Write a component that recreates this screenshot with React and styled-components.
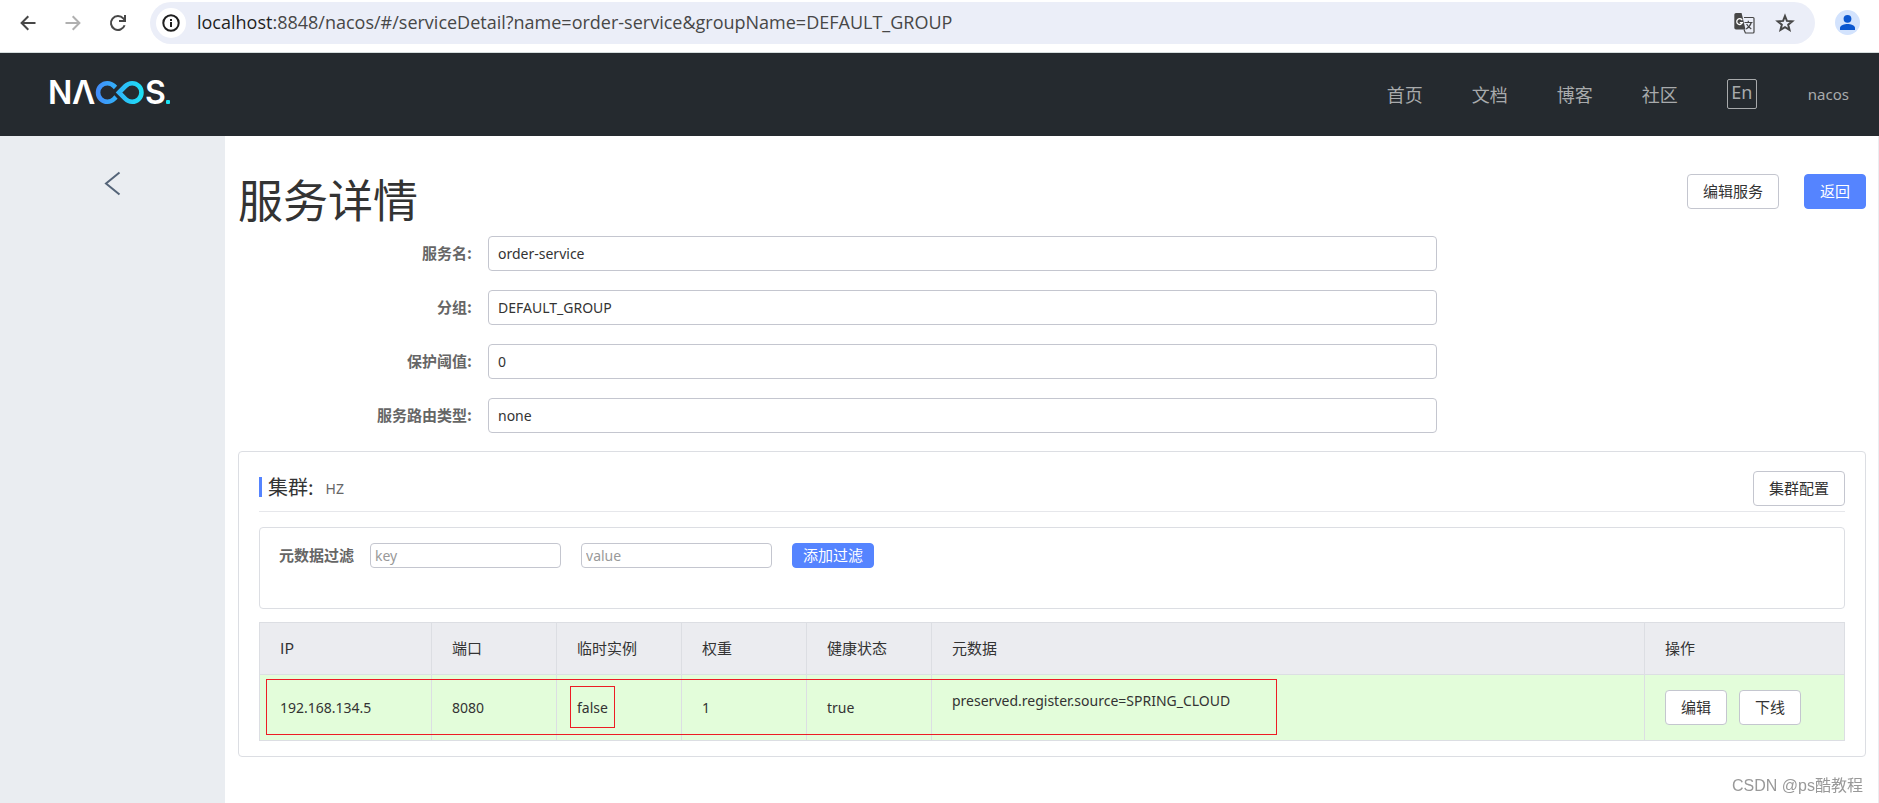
import React from "react";
import styled, { createGlobalStyle, css } from "styled-components";

const cjk = `"Noto Sans CJK SC", sans-serif`;
const latin = `"Noto Sans", "Noto Sans CJK SC", sans-serif`;

const color = {
  primary: "#5584ff",
  text: "#333333",
  label: "#666666",
  control: "#c4c6cf",
  line: "#dcdee3",
  mark: "#ed1c24",
};

const GlobalStyle = createGlobalStyle`
  *, *::before, *::after { box-sizing: border-box; }
  html, body, #root { height: 100%; }
  body { margin: 0; background: #fff; color: ${color.text}; font: 14px/20px ${latin}; }
  button, input { font: inherit; color: inherit; margin: 0; }
  h1, h2 { margin: 0; font-weight: 400; }
`;

const Page = styled.div`
  min-height: 100%;
  display: flex;
  flex-direction: column;
`;

/* Browser toolbar */
const BrowserBar = styled.div`
  display: flex;
  align-items: center;
  height: 53px;
  padding: 0 19px 7px 15px;
  border-bottom: 1px solid #d5dddd;
`;
const IconButton = styled.button`
  display: grid;
  place-items: center;
  width: 25px;
  height: 25px;
  padding: 0;
  border: 0;
  border-radius: 50%;
  background: ${(p) => p.$bg || "transparent"};
  color: ${(p) => p.$color || "#474747"};
`;
const History = styled.div`
  display: flex;
  gap: 20px;
  margin-right: 20px;
`;
const AddressBar = styled.div`
  flex: 1;
  display: flex;
  align-items: center;
  height: 42px;
  margin-top: 1px;
  margin-right: 20px;
  padding: 0 18px 0 6px;
  gap: 11px;
  border-radius: 21px;
  background: #ebeef8;
`;
const AddressActions = styled.div`
  display: flex;
  gap: 15px;
`;
const SiteInfo = styled(IconButton)`
  width: 30px;
  height: 30px;
  background: #fff;
  color: #1f1f1f;
`;
const UrlText = styled.div`
  flex: 1;
  padding-bottom: 2px;
  font: 18px/24px "Open Sans", sans-serif;
  color: #474747;
  b { font-weight: 400; color: #1f1f1f; }
`;

/* Site header */
const SiteHeader = styled.header`
  display: flex;
  align-items: center;
  justify-content: space-between;
  height: 83px;
  padding: 0 30px 2px 48px;
  background: #252a2f;
`;
const Nav = styled.nav`
  display: flex;
  align-items: center;
  gap: 49px;
  color: #a8aaac;
`;
const NavLink = styled.a`
  font: 18px/26px ${cjk};
  color: inherit;
  text-decoration: none;
`;
const LangButton = styled.button`
  width: 30px;
  height: 30px;
  padding: 0 0 4px;
  border: 1px solid currentColor;
  border-radius: 2px;
  background: transparent;
  font-size: 18px;
  line-height: 24px;
`;
const UserLink = styled(NavLink)`
  padding-left: 2px;
  font: 15px/24px ${latin};
`;

/* Body */
const Body = styled.div`
  flex: 1;
  display: flex;
`;
const Sidebar = styled.aside`
  width: 225px;
  padding: 34px 0 0 100px;
  background: #eaedf1;
`;
const Main = styled.main`
  flex: 1;
  min-width: 0;
  padding: 38px 12px 32px 13px;
  border-right: 1px solid #ebecf0;
`;
const TitleRow = styled.div`
  display: flex;
  justify-content: space-between;
  align-items: flex-start;
  margin-bottom: 12px;
`;
const Title = styled.h1`
  font: 45px/50px ${cjk};
`;
const Actions = styled.div`
  display: flex;
  gap: ${(p) => p.$gap}px;
`;
const Button = styled.button`
  height: 35px;
  padding: 0 15px 2px;
  border: 1px solid ${color.control};
  border-radius: 4px;
  background: #fff;
  color: ${color.text};
  font: 15px/24px ${cjk};
  ${(p) => p.$primary && css`
    border-color: ${color.primary};
    background: ${color.primary};
    color: #fff;
  `}
  ${(p) => p.$small && css`
    height: 25px;
    padding: 0 10px 2px;
    line-height: 20px;
  `}
`;

const Form = styled.form`
  display: grid;
  gap: 19px;
  margin-bottom: 18px;
`;
const Field = styled.div`
  display: flex;
  align-items: center;
`;
const Label = styled.label`
  padding-bottom: 2px;
  font: 700 15px/22px ${cjk};
  color: ${color.label};
`;
const FieldLabel = styled(Label)`
  width: 234px;
  margin-right: 16px;
  text-align: right;
`;
const TextInput = styled.input`
  width: 58.3%;
  height: 35px;
  padding: 0 9px;
  border: 1px solid ${color.control};
  border-radius: 4px;
  background: #fff;
  &::placeholder { color: #999; opacity: 1; }
`;
const FilterInput = styled(TextInput)`
  width: 191px;
  height: 25px;
  padding: 0 4px;
`;

const Card = styled.section`
  padding: 19px 20px 15px;
  border: 1px solid ${color.line};
  border-radius: 4px;
`;
const CardHead = styled.div`
  display: flex;
  justify-content: space-between;
  align-items: center;
  padding-bottom: 5px;
  margin-bottom: 15px;
  border-bottom: 1px solid #e6e7eb;
`;
const ClusterTitle = styled.h2`
  display: flex;
  align-items: center;
  height: 20px;
  margin-bottom: 3px;
  gap: 12px;
  padding-left: 6px;
  border-left: 3px solid ${color.primary};
  font: 20px/20px ${cjk};
  small { padding-top: 4px; font: 14px/20px ${latin}; color: ${color.label}; }
`;
const FilterBox = styled.form`
  display: flex;
  align-items: flex-start;
  gap: 20px;
  padding: 15px 19px 40px;
  margin-bottom: 13px;
  border: 1px solid ${color.line};
  border-radius: 4px;
`;
const KeyField = styled.div`
  display: flex;
  align-items: center;
  gap: 16px;
`;

const TableWrap = styled.div`
  position: relative;
`;
const Table = styled.table`
  width: 100%;
  table-layout: fixed;
  border-collapse: collapse;
`;
const Col = styled.col`
  width: ${(p) => (p.$w ? `${p.$w}px` : "auto")};
`;
const Th = styled.th`
  height: 52px;
  padding: 0 20px 2px;
  border: 1px solid ${color.line};
  background: #ebecf0;
  font: 15px/24px ${cjk};
  text-align: left;
`;
const Td = styled.td`
  height: 66px;
  padding: 0 20px;
  border: 1px solid ${color.line};
  background: #e3fdda;
`;
const Metadata = styled.div`
  padding-bottom: 14px;
`;
const Mark = styled.div`
  position: absolute;
  border: 1px solid ${color.mark};
  pointer-events: none;
`;
const RowMark = styled(Mark)`
  left: 7px;
  top: 57px;
  width: 1011px;
  height: 56px;
`;
const CellMark = styled(Mark)`
  left: 311px;
  top: 64px;
  width: 45px;
  height: 42px;
`;
const Watermark = styled.div`
  position: fixed;
  right: 16px;
  bottom: 5px;
  font: 16px/24px "Liberation Sans", ${cjk};
  color: #999;
`;

const stroke = { fill: "none", stroke: "currentColor" };

const BackIcon = () => (
  <svg width="16" height="16" viewBox="0 0 16 16" {...stroke} strokeWidth="2"><path d="M15.5 8H2M8.3 1.3 1.6 8l6.7 6.7" /></svg>
);
const ForwardIcon = () => (
  <svg width="16" height="16" viewBox="0 0 16 16" {...stroke} strokeWidth="2"><path d="M.5 8H14M7.7 1.3 14.4 8l-6.7 6.7" /></svg>
);
const ReloadIcon = () => (
  <svg width="18" height="18" viewBox="0 0 18 18" {...stroke} strokeWidth="2"><path d="M15.6 11.2A7 7 0 1 1 14.3 4.4L16 6.2" /><path d="M16 1v6h-6" /></svg>
);
const InfoIcon = () => (
  <svg width="18" height="18" viewBox="0 0 18 18" {...stroke} strokeWidth="2"><circle cx="9" cy="9" r="7.7" /><path d="M9 8v5M9 5v2" /></svg>
);
const TranslateIcon = () => (
  <svg width="21" height="21" viewBox="0 0 21 21">
    <path d="M10 4.5h9q1 0 1 1V19q0 1-1 1h-7.6L10 16.5" {...stroke} strokeWidth="1.2" />
    <path d="M2 0h5.6l3.9 16.5H2q-1.7 0-1.7-1.7V1.7Q.3 0 2 0Z" fill="currentColor" />
    <path d="M8.2 7.2A2.9 2.9 0 1 0 8.4 9.6H5.8" fill="none" stroke="#fff" strokeWidth="1.3" />
    <path d="M10.5 9.5h8M14.3 7.8v1.7M17.3 9.5c-.8 2.8-2.8 5-5.2 6.4M12.6 11c1 2 2.9 3.8 4.7 5" {...stroke} strokeWidth="1.2" />
  </svg>
);
const StarIcon = () => (
  <svg width="20" height="20" viewBox="0 0 20 20" {...stroke} strokeWidth="2"><path d="m10 3 1.9 4.9 5.4.4-4.1 3.4 1.3 5.2L10 14.1l-4.5 2.8 1.3-5.2-4.1-3.4 5.4-.4Z" /></svg>
);
const ProfileIcon = () => (
  <svg width="25" height="25" viewBox="0 0 25 25" fill="currentColor"><circle cx="12.5" cy="8.8" r="3.9" /><path d="M5 20v-2.2c0-2.4 4.5-3.9 7.5-3.9s7.5 1.5 7.5 3.9V20Z" /></svg>
);
const CollapseIcon = () => (
  <svg width="25" height="28" viewBox="0 0 25 28" {...stroke} strokeWidth="2"><path d="M19.5 2.5 6 13.5l13.5 11" /></svg>
);
const NacosLogo = () => (
  <svg width="126" height="44" viewBox="0 -7 126 44" role="img" aria-label="NACOS.">
    <defs>
      <linearGradient id="loop" gradientUnits="userSpaceOnUse" x1="47" y1="0" x2="96" y2="0">
        <stop offset="0" stopColor="#4489fb" />
        <stop offset="1" stopColor="#1be3f5" />
      </linearGradient>
    </defs>
    <g fill="#fff" fontFamily="Inter, sans-serif" fontWeight="600" fontSize="32">
      <text x="0" y="25">N</text>
      <text x="24" y="25">Λ</text>
      <text x="97" y="25">S</text>
    </g>
    <g fill="none" stroke="url(#loop)" strokeWidth="4.6">
      <path d="M67.5 8.500 66 7A9.300 9.300 0 1 0 66 20l2-2" />
      <path d="M71 13.500 77.500 7a9.300 9.300 0 1 1 0 13Z" />
    </g>
    <rect x="118" y="21" width="4" height="4" rx="1" fill="#1be3f5" />
  </svg>
);

const links = ["首页", "文档", "博客", "社区"];
const fields = [
  ["serviceName", "服务名:", "order-service"],
  ["group", "分组:", "DEFAULT_GROUP"],
  ["threshold", "保护阈值:", "0"],
  ["selector", "服务路由类型:", "none"],
];
const columns = [
  ["IP", 172],
  ["端口", 125],
  ["临时实例", 125],
  ["权重", 125],
  ["健康状态", 125],
  ["元数据", 0],
  ["操作", 200],
];
const instance = ["192.168.134.5", "8080", "false", "1", "true"];

export default function App() {
  return (
    <>
      <GlobalStyle />
      <Page>
        <BrowserBar>
          <History>
            <IconButton aria-label="Back"><BackIcon /></IconButton>
            <IconButton aria-label="Forward" $color="#b0b0b0"><ForwardIcon /></IconButton>
            <IconButton aria-label="Reload"><ReloadIcon /></IconButton>
          </History>
          <AddressBar>
            <SiteInfo aria-label="Site information"><InfoIcon /></SiteInfo>
            <UrlText><b>localhost</b>:8848/nacos/#/serviceDetail?name=order-service&amp;groupName=DEFAULT_GROUP</UrlText>
            <AddressActions>
              <IconButton aria-label="Translate"><TranslateIcon /></IconButton>
              <IconButton aria-label="Bookmark"><StarIcon /></IconButton>
            </AddressActions>
          </AddressBar>
          <IconButton aria-label="Profile" $bg="#d3e3fd" $color="#0b57d0"><ProfileIcon /></IconButton>
        </BrowserBar>

        <SiteHeader>
          <NacosLogo />
          <Nav>
            {links.map((l) => <NavLink href="#" key={l}>{l}</NavLink>)}
            <LangButton>En</LangButton>
            <UserLink href="#">nacos</UserLink>
          </Nav>
        </SiteHeader>

        <Body>
          <Sidebar>
            <IconButton aria-label="Collapse" $color="#546478"><CollapseIcon /></IconButton>
          </Sidebar>
          <Main>
            <TitleRow>
              <Title>服务详情</Title>
              <Actions $gap={25}>
                <Button>编辑服务</Button>
                <Button $primary>返回</Button>
              </Actions>
            </TitleRow>

            <Form>
              {fields.map(([id, label, value]) => (
                <Field key={id}>
                  <FieldLabel htmlFor={id}>{label}</FieldLabel>
                  <TextInput id={id} value={value} readOnly />
                </Field>
              ))}
            </Form>

            <Card>
              <CardHead>
                <ClusterTitle>集群: <small>HZ</small></ClusterTitle>
                <Button>集群配置</Button>
              </CardHead>
              <FilterBox>
                <KeyField>
                  <Label htmlFor="filterKey">元数据过滤</Label>
                  <FilterInput id="filterKey" placeholder="key" />
                </KeyField>
                <FilterInput aria-label="value" placeholder="value" />
                <Button type="button" $primary $small>添加过滤</Button>
              </FilterBox>
              <TableWrap>
                <Table>
                  <colgroup>{columns.map(([n, w]) => <Col key={n} $w={w} />)}</colgroup>
                  <thead>
                    <tr>{columns.map(([n]) => <Th key={n}>{n}</Th>)}</tr>
                  </thead>
                  <tbody>
                    <tr>
                      {instance.map((v) => <Td key={v}>{v}</Td>)}
                      <Td><Metadata>preserved.register.source=SPRING_CLOUD</Metadata></Td>
                      <Td>
                        <Actions $gap={12}>
                          <Button>编辑</Button>
                          <Button>下线</Button>
                        </Actions>
                      </Td>
                    </tr>
                  </tbody>
                </Table>
                <RowMark />
                <CellMark />
              </TableWrap>
            </Card>
          </Main>
        </Body>
        <Watermark>CSDN @ps酷教程</Watermark>
      </Page>
    </>
  );
}
